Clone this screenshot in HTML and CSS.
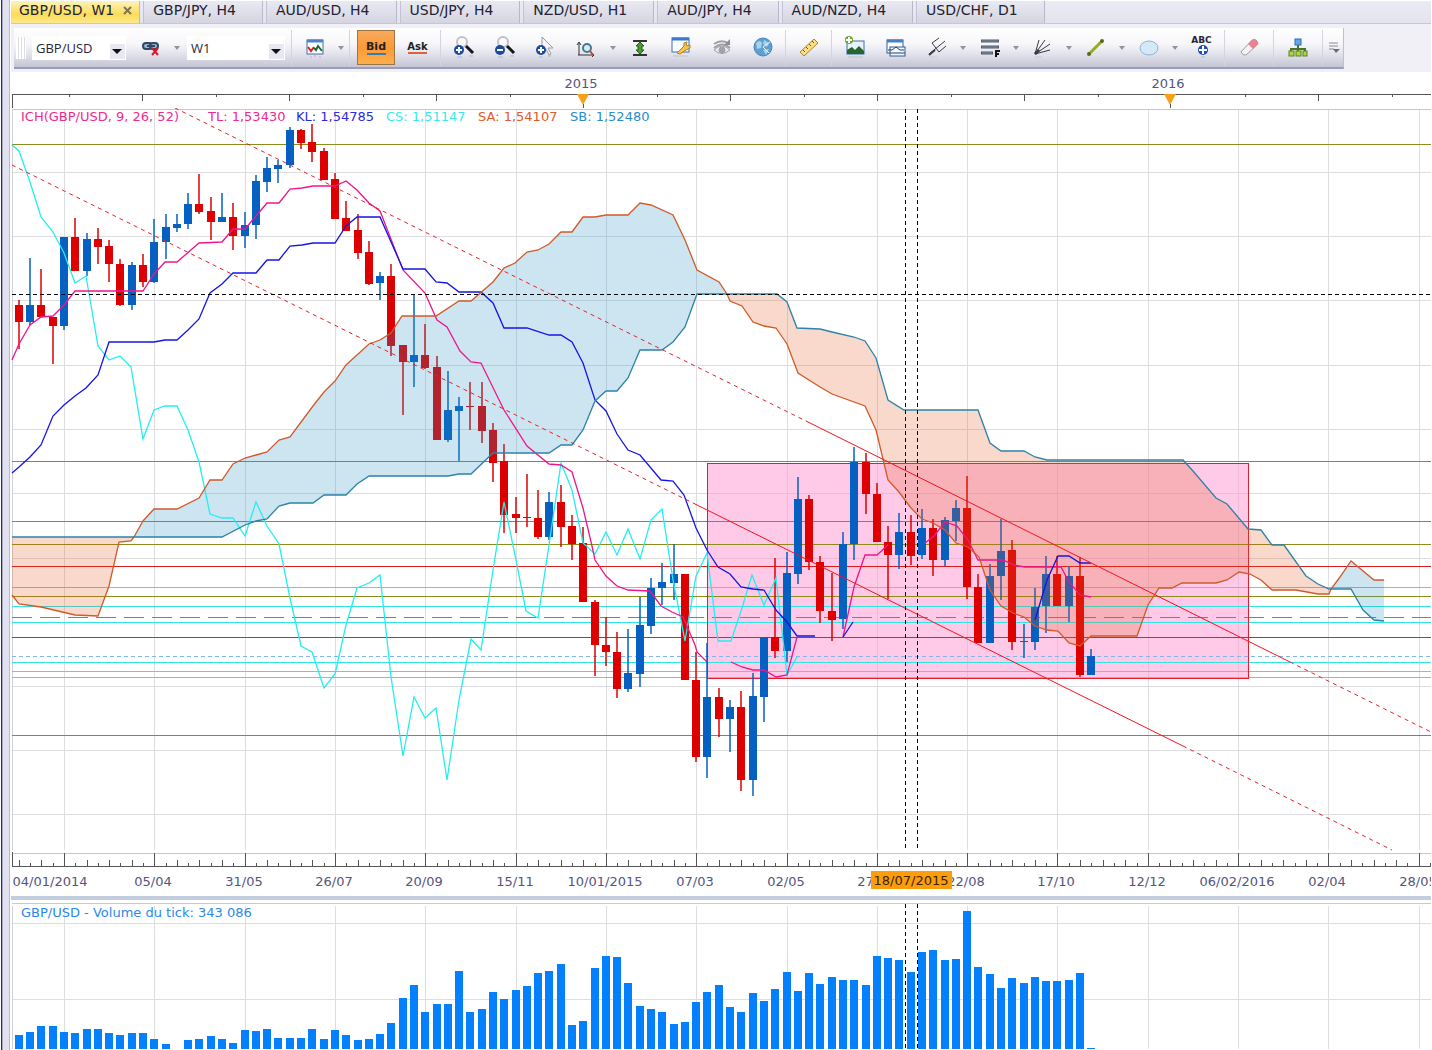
FILE: index.html
```html
<!DOCTYPE html>
<html lang="fr">
  <head>
    <meta charset="UTF-8" />
    <title>GBP/USD, W1</title>
    <link rel="stylesheet" href="styles.css">
  </head>
  <body>
    <div class="window">
      <nav class="tabs">
        <button class="tab active">GBP/USD, W1
          <svg width="9" height="9" viewBox="0 0 9 9"><path d="M1 1l7 7M8 1l-7 7" stroke="#7d7455" stroke-width="2" /></svg>
        </button>
        <button class="tab">GBP/JPY, H4</button>
        <button class="tab">AUD/USD, H4</button>
        <button class="tab">USD/JPY, H4</button>
        <button class="tab">NZD/USD, H1</button>
        <button class="tab">AUD/JPY, H4</button>
        <button class="tab">AUD/NZD, H4</button>
        <button class="tab">USD/CHF, D1</button>
      </nav>

      <div class="strip">
        <div class="toolbar">
          <span class="grip"></span>
          <label class="combo">
            <select aria-label="Instrument"><option>GBP/USD</option></select>
          </label>
          <button class="tool" aria-label="Unlink">
            <svg width="24" height="24" viewBox="0 0 24 24">
              <g fill="#9fb4c8" stroke="#2c4866" stroke-width="2"><rect x="4" y="7" width="9" height="6" rx="3" /><rect x="11" y="7" width="8" height="6" rx="3" /><path d="M8 10h8" /></g>
              <path d="M13 12l6 7M19 12l-6 7" stroke="#e01525" stroke-width="2" />
            </svg>
          </button>
          <button class="more" aria-label="More link options"></button>
          <label class="combo period">
            <select aria-label="Period"><option>W1</option></select>
          </label>
          <span class="sep"></span>
          <button class="tool" aria-label="Indicators">
            <svg width="24" height="24" viewBox="0 0 24 24">
              <rect x="4" y="4" width="16" height="14" fill="#fff" stroke="#3b6fae" /><path d="M4 5h16" stroke="#4c84cc" stroke-width="3" />
              <path d="M5 11l3 4 3-4" fill="none" stroke="#d8202a" stroke-width="2" /><path d="M11 12l2 2 2-4 4 5" fill="none" stroke="#1c6a35" stroke-width="2" />
              <path d="M7 21h2M11 20h2M16 21h2" stroke="#d7a6b4" />
            </svg>
          </button>
          <button class="more" aria-label="More indicators"></button>
          <span class="sep"></span>
          <button class="price bid">Bid</button>
          <button class="price ask">Ask</button>
          <span class="sep"></span>
          <button class="tool" aria-label="Zoom in">
            <svg width="24" height="24" viewBox="0 0 24 24">
              <circle cx="10" cy="6" r="5" fill="#fafafc" stroke="#c0c0ca" stroke-width="2" /><path d="M14 10l7 7" stroke="#15151c" stroke-width="3" />
              <circle cx="7" cy="14" r="5" fill="#1b4c9c" /><path d="M4 14h6M7 11v6" stroke="#fff" stroke-width="2" /><path d="M5 21h5M17 20h4" stroke="#b0b7cc" />
            </svg>
          </button>
          <button class="tool" aria-label="Zoom out">
            <svg width="24" height="24" viewBox="0 0 24 24">
              <circle cx="10" cy="6" r="5" fill="#fafafc" stroke="#c0c0ca" stroke-width="2" /><path d="M14 10l7 7" stroke="#15151c" stroke-width="3" />
              <circle cx="7" cy="14" r="5" fill="#1b4c9c" /><path d="M4 14h6" stroke="#fff" stroke-width="2" /><path d="M5 21h5M17 20h4" stroke="#b0b7cc" />
            </svg>
          </button>
          <button class="tool" aria-label="Pointer">
            <svg width="24" height="24" viewBox="0 0 24 24">
              <path d="M8 1v15l4-3 3 6 2-1-3-6h5z" fill="#f5f5f8" stroke="#9b9ba6" />
              <circle cx="7" cy="14" r="5" fill="#1b4c9c" /><path d="M4 14h6M7 11v6" stroke="#fff" stroke-width="2" /><path d="M5 21h4M14 20h3" stroke="#b0b7cc" />
            </svg>
          </button>
          <button class="tool" aria-label="Fit scale">
            <svg width="24" height="24" viewBox="0 0 24 24">
              <path d="M4 7v12M2 9l2-3 2 3M3 19h16l-2-2M17 21l2-2" fill="none" stroke="#333" />
              <circle cx="12" cy="12" r="4" fill="#d5ecf5" stroke="#467b8e" stroke-width="2" /><path d="M15 15l3 4" stroke="#c04a35" stroke-width="2" />
            </svg>
          </button>
          <button class="more" aria-label="More scales"></button>
          <button class="tool" aria-label="Vertical fit">
            <svg width="24" height="24" viewBox="0 0 24 24">
              <path d="M5 5h14M5 19h14" stroke="#333" stroke-width="2" /><path d="M12 6l4 4h-2v4h2l-4 4-4-4h2v-4h-2z" fill="#4c9a32" stroke="#245c18" />
            </svg>
          </button>
          <button class="tool" aria-label="Chart properties">
            <svg width="24" height="24" viewBox="0 0 24 24">
              <rect x="3" y="2" width="17" height="14" fill="#f8fbff" stroke="#3c6fb5" /><path d="M3 3h17" stroke="#3c78cc" stroke-width="3" />
              <path d="M8 17l7-7 0-3 3-1-1 3 2 1 2-1 0 3-4 2-6 4z" fill="#f5c545" stroke="#b57f20" /><path d="M4 20h15" stroke="#c8c2c0" />
            </svg>
          </button>
          <button class="tool" aria-label="Toggle visibility">
            <svg width="24" height="24" viewBox="0 0 24 24" fill="none" stroke="#a0a0a9">
              <path d="M4 14q8-8 16 0q-8 7-16 0z" /><path d="M4 12q8-7 16 0" stroke-width="2" /><circle cx="12" cy="14" r="3" fill="#a2a2ab" /><path d="M4 8q7-5 14-1" stroke-width="2" /><path d="M20 3v6h-6z" fill="#8c8c96" stroke="none" />
            </svg>
          </button>
          <button class="tool" aria-label="World clock">
            <svg width="24" height="24" viewBox="0 0 24 24">
              <circle cx="12" cy="11" r="9" fill="#5f9fd0" stroke="#4a86bd" /><path d="M5 7q4-4 6 0l-1 5-4 1zM13 4l5 3-2 4-4-3zM12 14l6-1-3 6z" fill="#a6d2ee" /><path d="M12 11l7-5M12 11l6 6" stroke="#e5f4fc" />
            </svg>
          </button>
          <span class="sep"></span>
          <button class="tool" aria-label="Ruler">
            <svg width="24" height="24" viewBox="0 0 24 24">
              <path d="M3 16L17 3l4 4L7 20z" fill="#f8df83" stroke="#ad8430" /><path d="M6 14l2 2M9 11l2 2M12 8l2 2M15 5l2 2" stroke="#765513" />
            </svg>
          </button>
          <span class="sep"></span>
          <button class="tool" aria-label="Add picture">
            <svg width="24" height="24" viewBox="0 0 24 24">
              <rect x="4" y="5" width="17" height="13" fill="#e7f3fc" stroke="#3c6fa5" /><path d="M4 18v-4l5-3 3 3 4-4 5 5v3z" fill="#24662b" />
              <circle cx="6" cy="4" r="4" fill="#6aa52c" /><path d="M3 4h6M6 1v6" stroke="#fff" stroke-width="2" /><path d="M5 21h15" stroke="#b9c3bd" />
            </svg>
          </button>
          <button class="tool" aria-label="Add window">
            <svg width="24" height="24" viewBox="0 0 24 24">
              <rect x="3" y="4" width="16" height="13" fill="#fff" stroke="#335a96" /><path d="M3 5h16" stroke="#4b7fc2" stroke-width="3" />
              <rect x="6" y="11" width="15" height="9" fill="#f3f8ff" stroke="#335a96" /><path d="M4 14h4l4-3 4 3h4M6 17h15" fill="none" stroke="#26406c" />
            </svg>
          </button>
          <button class="tool" aria-label="Pitchfork">
            <svg width="24" height="24" viewBox="0 0 24 24" fill="none" stroke="#3c3c46">
              <path d="M4 18L20 5" /><path d="M7 7l7 9M7 7l7-5M14 16l7-6" /><path d="M4 19l6-5" stroke-width="2" /><path d="M4 21h8" stroke="#cdcdd6" />
            </svg>
          </button>
          <button class="more" aria-label="More pitchforks"></button>
          <button class="tool" aria-label="Fibonacci levels">
            <svg width="24" height="24" viewBox="0 0 24 24">
              <path d="M3 5h18M3 11h18M3 17h12" stroke="#4f5c6c" stroke-width="3" /><path d="M4 5h16M4 11h16M4 17h10" stroke="#8291a2" />
              <path d="M18 21v-6h4M18 18h3" fill="none" stroke="#111" stroke-width="2" />
            </svg>
          </button>
          <button class="more" aria-label="More levels"></button>
          <button class="tool" aria-label="Fan">
            <svg width="24" height="24" viewBox="0 0 24 24" fill="none" stroke="#3a3a44">
              <path d="M4 18L8 4M4 18L14 4M4 18L19 8M4 18l15-4" /><path d="M4 18l4-4" stroke-width="3" /><path d="M4 21h7" stroke="#c8c8d2" />
            </svg>
          </button>
          <button class="more" aria-label="More fans"></button>
          <button class="tool" aria-label="Trend line">
            <svg width="24" height="24" viewBox="0 0 24 24">
              <path d="M5 18L18 5" stroke="#94ad20" stroke-width="3" /><circle cx="5" cy="18" r="2" fill="#56691d" /><circle cx="18" cy="5" r="2" fill="#56691d" />
            </svg>
          </button>
          <button class="more" aria-label="More lines"></button>
          <button class="tool" aria-label="Ellipse">
            <svg width="24" height="24" viewBox="0 0 24 24"><ellipse cx="12" cy="12" rx="9" ry="7" fill="#d4e8f8" stroke="#8fb2d4" /></svg>
          </button>
          <button class="more" aria-label="More shapes"></button>
          <button class="tool text-tool" aria-label="Add text">
            <span>ABC</span>
            <svg width="12" height="14" viewBox="0 0 12 14">
              <circle cx="7" cy="5" r="5" fill="#1c4fac" /><path d="M3 5h8M7 1v8" stroke="#fff" stroke-width="2" /><path d="M5 12h4" stroke="#a8bce0" />
            </svg>
          </button>
          <span class="sep"></span>
          <button class="tool wide" aria-label="Erase">
            <svg width="24" height="24" viewBox="0 0 24 24">
              <path d="M4 16L15 4q3-2 5 1t0 4L9 19q-3 1-5-3z" fill="#f4f2f2" stroke="#a09da2" /><path d="M11 8l4-4q3-2 5 1t0 4l-4 4z" fill="#ea8290" />
            </svg>
          </button>
          <span class="sep"></span>
          <button class="tool wide" aria-label="Object tree">
            <svg width="24" height="24" viewBox="0 0 24 24">
              <path d="M12 8v7M5 16v-3h14v3" fill="none" stroke="#4d7420" stroke-width="2" />
              <rect x="9" y="3" width="6" height="6" fill="#64a6e6" stroke="#2870b8" />
              <g fill="#b4d343" stroke="#56801e"><rect x="3" y="15" width="5" height="5" /><rect x="10" y="15" width="5" height="5" /><rect x="17" y="15" width="4" height="5" /></g>
            </svg>
          </button>
          <span class="sep"></span>
          <button class="tool menu" aria-label="Toolbar options">
            <svg width="12" height="12" viewBox="0 0 12 12"><path d="M1 1h9M1 4h9M1 7h5" stroke="#8a8a94" /><path d="M5 7h7l-4 4z" fill="#6c6c76" /></svg>
          </button>
        </div>
      </div>

      <svg class="years" id="years"></svg>

      <div class="plot">
        <svg class="main" id="main"></svg>
        <div class="legend">
          <span class="tenkan">ICH(GBP/USD, 9, 26, 52)</span>
          <span class="tenkan">TL: 1,53430</span>
          <span class="kijun">KL: 1,54785</span>
          <span class="chikou">CS: 1,51147</span>
          <span class="span-a">SA: 1,54107</span>
          <span class="span-b">SB: 1,52480</span>
        </div>
      </div>

      <svg class="dates" id="dates"></svg>
      <div class="splitter"></div>

      <div class="plot volume">
        <svg id="volume"></svg>
        <div class="legend">GBP/USD - Volume du tick: 343 086</div>
      </div>
    </div>

    <script src="chart.js"></script>
  </body>
</html>
```

FILE: styles.css
```css
html,
body {
  margin: 0;
  padding: 0;
  overflow: hidden;
}

body {
  font-family: 'DejaVu Sans', Verdana, sans-serif;
  font-size: 13px;
  color: #26263a;
  background: #fff;
}

button,
select {
  margin: 0;
  padding: 0;
  border: 0;
  background: none;
  color: inherit;
  font: inherit;
}

svg {
  display: block;
}

.window {
  display: flex;
  flex-direction: column;
  box-sizing: border-box;
  height: 100vh;
  padding: 1px 1px 1px 11px;
  background: linear-gradient(to right, #fff 1px, #2a2f50 1px, #2a2f50 2px, #a9abc4 2px, #a9abc4 3px, #e1e1ef 3px, #e1e1ef 9px, #b9b9c8 9px, #b9b9c8 10px, #fff 10px);
}

/* tabs */
.tabs {
  display: flex;
  gap: 3px;
  height: 22px;
  border-bottom: 1px solid #c6c6d6;
  background: linear-gradient(#ebebf4, #e3e3ef);
}

.tab {
  padding: 0 26px 4px 9px;
  border-left: 1px solid #c2c2d2;
  border-right: 1px solid #b8b8ca;
  background: linear-gradient(#e9e9f3, #d5d5e2);
  color: #222230;
  font-size: 14px;
  white-space: nowrap;
}

.tab.active {
  display: flex;
  align-items: center;
  gap: 9px;
  padding: 0 7px 4px 8px;
  border-left: 0;
  background: linear-gradient(#fdf3bd, #fbdc58 60%, #fde88c);
}

/* toolbar */
.strip {
  padding: 4px 0 3px 3px;
  background: #f0f0f6;
}

.toolbar {
  display: inline-flex;
  align-items: center;
  height: 39px;
  border-bottom: 2px solid #9c9cb4;
  border-right: 1px solid #c0c0ce;
  background: linear-gradient(#fff, #f7f7fa 40%, #e0e0ea 70%, #c4c4d4);
  vertical-align: top;
}

.grip {
  width: 10px;
  height: 22px;
  margin: 0 2px;
  background: repeating-linear-gradient(to right, #fff 0, #fff 2px, #dcdce6 2px, #dcdce6 3px);
}

.combo {
  position: relative;
  width: 94px;
  margin: 0 4px;
}

.combo.period {
  width: 98px;
}

.combo select {
  width: 100%;
  height: 24px;
  padding-left: 4px;
  appearance: none;
  background: #fff;
  font-family: 'Open Sans', sans-serif;
  font-size: 13px;
}

.combo::before,
.combo::after {
  content: '';
  position: absolute;
  pointer-events: none;
}

.combo::before {
  right: 1px;
  bottom: 1px;
  width: 15px;
  height: 15px;
  background: #e8e8f0;
}

.combo::after {
  right: 4px;
  bottom: 6px;
  border: 5px solid transparent;
  border-top-color: #111;
  border-bottom: 0;
}

.tool {
  display: flex;
  align-items: center;
  justify-content: center;
  width: 41px;
  height: 36px;
}

.tool.wide {
  width: 44px;
}

.tool.menu {
  width: 18px;
}

.more {
  width: 12px;
  height: 36px;
}

.more::before {
  content: '';
  display: block;
  width: 0;
  margin: 0 auto;
  border: 3px solid transparent;
  border-top: 4px solid #92929e;
  border-bottom: 0;
}

.sep {
  width: 1px;
  height: 36px;
  margin: 0 2px;
  background: #d4d4de;
}

.price {
  width: 41px;
  height: 35px;
  font-size: 11px;
  font-weight: bold;
  color: #222;
}

.price::after {
  content: '';
  display: block;
  width: 19px;
  height: 2px;
  margin: 0 auto;
  background: #e0603c;
}

.price.bid {
  width: 38px;
  margin: 0 2px 0 5px;
  border: 1px solid #9d7445;
  background: linear-gradient(#f8a95c, #fb9a38 50%, #ffae4c);
}

.price.ask {
  font-size: 10px;
}

.price.bid::after {
  background: #4078b4;
}

.text-tool {
  flex-direction: column;
  font-size: 9px;
  font-weight: bold;
  line-height: 9px;
}

/* charts */
.years,
.dates,
.main,
.volume svg {
  width: 100%;
}

.years {
  height: 36px;
}

.main {
  height: 744px;
}

.dates {
  height: 44px;
}

.plot {
  position: relative;
}

.volume {
  flex: 1;
  min-height: 0;
}

.volume svg {
  height: 100%;
}

.splitter {
  height: 4px;
  background: #c2cedd;
}

.legend {
  position: absolute;
  top: 1px;
  left: 10px;
  display: grid;
  grid-template-columns: 187px 88px 90px 92px 92px auto;
  line-height: 16px;
  white-space: nowrap;
}

.volume .legend {
  top: 5px;
  display: block;
  color: #2a88ee;
}

.tenkan {
  color: #ee2a90;
}

.kijun {
  color: #2a2ae0;
}

.chikou {
  color: #3ce6ee;
}

.span-a {
  color: #e05a2a;
}

.span-b {
  color: #2a8cc8;
}

svg text {
  font-size: 13px;
  fill: #54547e;
  text-anchor: middle;
}

svg .cursor-date {
  fill: #3a2408;
}

.crisp {
  shape-rendering: crispEdges;
}

.wick {
  stroke-width: 1.5;
}

polyline {
  fill: none;
  stroke-width: 1.3;
}
```

FILE: chart.js
```js
const NS = 'http://www.w3.org/2000/svg';
const LEFT = 11;
const RED = '#de0000';
const BLUE = '#0560c2';

// adds one svg element to a parent
function add(parent, tag, attrs, text) {
  const el = document.createElementNS(NS, tag);
  for (const key in attrs) {
    el.setAttribute(key, attrs[key]);
  }
  if (text) {
    el.textContent = text;
  }
  parent.appendChild(el);
  return el;
}

// every pane shares the coordinates of the window
function pane(id, top) {
  return add(document.getElementById(id), 'g', { transform: `translate(${-LEFT} ${-top})` });
}

function line(g, x1, y1, x2, y2, stroke, dash) {
  const attrs = { x1, y1, x2, y2, stroke, 'stroke-dasharray': dash || 'none' };
  if (x1 === x2 || y1 === y2) {
    attrs.class = 'crisp';
  }
  return add(g, 'line', attrs);
}

function hline(g, y, stroke, dash) {
  line(g, 12, y, '120%', y, stroke, dash);
}

function slotX(i) {
  return Math.round(18.8 + 11.29 * i);
}

function parse(str) {
  return str.trim().split(/\s+/).map((p) => p.split(',').map(Number));
}

// colour, high, body top, body bottom, low
const candles = `
r300,305,322,349 b258,305,322,325 r269,305,317,317 r317,317,326,364 b237,237,326,330
r218,237,271,271 b233,239,271,276 r228,239,247,264 r240,246,264,282 r259,264,305,306
b262,265,305,310 r254,265,282,287 b219,242,282,283 b214,227,242,259 b214,224,228,232
b193,204,224,229 r174,204,212,214 r197,211,222,240 b193,217,222,222 r203,217,236,250
b212,225,236,248 b175,181,225,239 b157,168,182,192 b160,165,169,183 b127,130,165,168
r129,130,143,149 r124,142,152,162 r148,151,180,180 r173,179,219,219 r201,218,231,231
r214,230,253,259 r241,252,284,285 b272,276,283,300 r264,276,346,356 r345,345,362,415
b295,355,362,387 r324,355,368,369 r356,367,440,440 b371,410,440,442 b397,406,411,461
r382,406,407,430 r382,406,431,443 r423,430,463,482 r444,461,515,533 r497,514,518,533
r474,517,518,527 r490,518,537,539 b492,502,537,540 r485,502,527,547 r515,526,544,560
r527,543,602,602 r600,602,645,676 r617,645,652,666 r632,652,689,698 b629,673,689,692
b597,625,674,687 b578,588,626,634 b563,582,588,605 b544,574,583,600 r574,574,680,680
r652,680,757,762 b643,697,757,778 r688,697,719,737 b700,707,719,752 r691,707,780,791
b673,696,780,796 b637,637,697,722 r558,637,651,658 b552,573,651,662 b477,499,574,584
r495,499,562,570 r556,562,611,623 r573,611,620,641 b532,544,619,629 b447,462,544,560
r453,462,494,514 r483,494,542,542 r526,542,555,599 b513,532,555,569 r515,532,556,565
b509,528,555,559 r519,528,560,576 b517,520,560,566 b500,508,521,541 r476,508,587,599
r574,587,643,643 b564,576,643,643 b519,551,576,600 r540,550,642,650 b624,641,642,658
b588,607,642,650 b556,574,606,633 r556,574,606,606 b566,576,606,622 r557,576,675,677
b649,656,675,675`.trim().split(/\s+/);

const volumeTops = [
  1035, 1032, 1026, 1026, 1032, 1033, 1029, 1029, 1033, 1035, 1033, 1033, 1039, 1044, 1049, 1040,
  1039, 1036, 1039, 1043, 1030, 1031, 1029, 1038, 1038, 1038, 1029, 1039, 1030, 1035, 1040, 1039,
  1034, 1023, 998, 985, 1012, 1004, 1004, 971, 1012, 1009, 992, 999, 990, 986, 973, 971,
  964, 1025, 1021, 968, 956, 957, 983, 1006, 1009, 1012, 1024, 1022, 1002, 992, 985, 1007,
  1012, 993, 1001, 989, 972, 991, 973, 984, 977, 980, 980, 985, 956, 958, 960, 972,
  952, 950, 960, 959, 911, 967, 974, 988, 978, 983, 977, 981, 981, 980, 973, 1048
];

const tenkan = [
  `12,360 19,344 30,325 41,317 53,316 64,305 75,291 143,291 154,274 165,262 177,262 199,243 222,242
  233,229 245,229 256,216 267,203 279,203 290,189 302,188 313,186 335,186 346,181 357,190 369,203
  380,211 403,270 425,293 437,320 447,327 460,351 471,362 481,363 504,410 527,446 549,464 561,465
  572,472 583,508 592,546 595,560 606,576 617,586 628,590 650,591 661,606 672,612 683,617 695,645
  697,652 707,662`,
  `731,662 742,667 753,670 764,670 776,677 787,675 797,637`,
  `843,637 854,587 865,555 877,555 888,545`,
  `925,543 934,536 945,522 957,526 968,540 978,560 1003,560 1014,565 1025,567 1061,567 1069,582
  1080,595 1091,597`
];

const kijun = [
  `12,473 19,467 30,457 41,445 53,416 64,405 75,396 86,388 98,375 109,342 154,342 165,340 177,340
  188,330 199,319 210,293 222,284 233,273 256,273 267,260 279,260 290,246 302,245 313,243 335,243
  346,226 357,217 380,217 403,269 425,269 436,282 447,283 459,292 481,292 493,303 504,328 527,328
  549,335 561,335 572,342 583,363 595,400 606,411 617,434 628,450 640,455 661,480 673,481 684,495
  696,528 707,550 718,567 730,574 741,587 753,589 764,590 776,610 787,622 797,636 815,636`,
  `843,637 853,622`,
  `1035,620 1047,580 1058,556 1069,556 1080,563 1091,563`
];

const chikou = [
  `12,145 19,151 30,182 41,217 53,232 64,253 75,283 86,276 98,346 109,360 120,356 131,367 143,439
  154,410 165,406 177,406 188,430 199,462 210,514 222,518 233,518 245,536 256,502 267,526 279,544
  290,598 301,646 312,652 324,688 335,674 346,625 357,588 369,583 380,575 391,677 403,756 414,697
  425,718 436,708 447,780 459,700 471,639 481,650 493,570 504,502 516,560 526,611 538,618 549,545
  561,463 572,490 583,543 595,554 606,532 617,555 628,529 640,559 651,520 662,509 673,580 685,641
  696,576 707,553 718,641 731,641 742,608 752,575 764,605 776,578 787,675 797,657`
];

const spanA = parse(`12,595 19,604 41,607 75,615 98,616 109,586 119,542 131,541 134,537 143,521
  154,509 177,509 199,498 210,480 222,480 233,464 245,458 256,455 267,452 279,440 290,437 313,406
  324,392 335,381 346,365 369,344 380,340 391,333 402,316 436,316 459,301 471,301 493,282 504,268
  515,263 527,252 538,250 549,244 561,232 572,232 583,217 595,217 606,215 628,215 640,203 651,205
  673,215 685,240 697,270 719,282 727,294 730,301 742,306 753,322 764,326 776,328 787,344 798,373
  820,387 832,394 865,406 876,430 888,480 899,492 911,508 922,519 933,523 945,530 956,543 968,547
  979,557 990,590 1001,606 1013,613 1024,617 1035,626 1047,630 1058,631 1069,643 1080,646 1091,636
  1137,636 1148,605 1159,588 1172,588 1182,583 1216,583 1227,580 1239,572 1250,574 1261,580
  1272,590 1296,590 1318,594 1329,594 1331,589 1340,577 1351,561 1374,580 1384,580`);

const spanB = parse(`12,537 134,537 222,537 245,525 256,521 267,519 279,506 290,503 313,503 324,495
  346,495 357,484 369,476 448,476 459,474 471,474 493,453 549,453 561,445 572,445 583,430 595,401
  606,391 617,391 628,378 640,350 662,350 673,342 685,327 697,294 727,294 777,294 787,302 797,328
  820,329 832,332 854,337 865,341 876,358 888,400 904,410 978,410 990,443 1001,451 1024,451
  1035,457 1047,460 1183,460 1193,471 1216,498 1227,504 1248,529 1261,530 1272,545 1284,545
  1306,576 1318,584 1329,589 1331,589 1351,589 1363,610 1374,620 1384,621`);

function polyline(g, points, stroke) {
  add(g, 'polyline', { points, stroke });
}

// part of the cloud between two crossings of its edges
function cloud(g, from, to, fill) {
  const inside = (p) => p[0] >= from && p[0] <= to;
  const points = spanA.filter(inside).concat(spanB.filter(inside).reverse());
  add(g, 'polygon', { points: points.join(' '), fill });
}

function grid(g, top, bottom, rows) {
  for (let x = 64, i = 4; x < 3000; i += 8, x = slotX(i)) {
    line(g, x, top, x, bottom, '#dedee0');
  }
  rows.forEach((y) => hline(g, y, '#dedee0'));
  line(g, 12, top, 12, bottom, '#d0d0d8');
}

function crosshair(g, top, bottom) {
  line(g, 905, top, 905, bottom, '#000', '4 3');
  line(g, 917, top, 917, bottom, '#000', '4 3');
}

function drawYears() {
  const g = pane('years', 72);
  hline(g, 94, '#555');
  line(g, 12, 94, 12, 108, '#555');
  for (let i = 0; i < 40; i++) {
    const x = Math.round(68.5 + 73.5 * i);
    line(g, x, 94, x, i % 2 ? 101 : 97, '#555');
  }
  [[583, '2015'], [1170, '2016']].forEach(([x, label]) => {
    add(g, 'path', { d: `M${x - 6} 94h12l-6 11z`, fill: '#f9a01b' });
    line(g, x, 104, x, 108, '#555');
    add(g, 'text', { x: x - 2, y: 88 }, label);
  });
}

function drawMain() {
  const g = pane('main', 108);
  hline(g, 109, '#c6c6d2');
  grid(g, 110, 850, [172, 236, 300, 365, 429, 493, 558, 622, 686, 750, 814]);
  add(g, 'rect', { x: 707, y: 463, width: 541, height: 215, fill: '#ff96cf', 'fill-opacity': 0.5 });

  [144, 461, 521, 544, 596, 735].forEach((y) => hline(g, y, '#8c8c1c'));
  hline(g, 617, '#8c8c1c', '20 8');
  hline(g, 566, '#d81c1c');
  hline(g, 637, '#f01c1c');
  hline(g, 656, '#7db8e8', '4 3');
  [587, 606, 622, 662, 671, 677].forEach((y) => hline(g, y, '#30e4e8'));
  add(g, 'rect', { x: 707, y: 463, width: 541, height: 215, fill: 'none', stroke: '#e02030', class: 'crisp' });

  candles.forEach((candle, i) => {
    const [high, top, bottom, low] = candle.slice(1).split(',').map(Number);
    const color = candle[0] === 'r' ? RED : BLUE;
    const x = slotX(i);
    add(g, 'line', { x1: x, y1: high, x2: x, y2: low, stroke: color, class: 'wick' });
    add(g, 'rect', { x: x - 4, y: top, width: 8, height: bottom - top, fill: color });
  });

  cloud(g, 12, 134, 'rgba(225,90,35,0.23)');
  cloud(g, 134, 727, 'rgba(40,145,195,0.24)');
  cloud(g, 727, 1331, 'rgba(225,90,35,0.23)');
  cloud(g, 1331, 1384, 'rgba(40,145,195,0.24)');

  chikou.forEach((points) => polyline(g, points, '#22eef0'));
  tenkan.forEach((points) => polyline(g, points, '#f0148c'));
  kijun.forEach((points) => polyline(g, points, '#1414e6'));
  polyline(g, spanA.join(' '), '#d05a28');
  polyline(g, spanB.join(' '), '#2c82a8');

  // trend channel, dashed where it is extended
  line(g, 175, 108, 808, 422, '#e8202c', '4 4');
  line(g, 808, 422, 1290, 662, '#f4141c');
  line(g, 1290, 662, 1431, 732, '#e8202c', '4 4');
  line(g, 12, 165, 693, 503, '#e8202c', '4 4');
  line(g, 693, 503, 1183, 746, '#f4141c');
  line(g, 1183, 746, 1392, 850, '#e8202c', '4 4');

  hline(g, 294, '#000', '4 3');
  crosshair(g, 109, 850);
}

function drawDates() {
  const g = pane('dates', 852);
  hline(g, 853, '#c6c6d2');
  hline(g, 866, '#555');
  line(g, 12, 852, 12, 866, '#555');
  for (let i = 0; i < 260; i++) {
    const x = slotX(i);
    const top = i % 8 === 4 ? 853 : i % 2 ? 863 : 860;
    line(g, x, top, x, 866, '#555');
  }
  const labels = ['04/01/2014', '05/04', '31/05', '26/07', '20/09', '15/11', '10/01/2015', '07/03',
    '02/05', '27/06', '22/08', '17/10', '12/12', '06/02/2016', '02/04', '28/05'];
  labels.forEach((label, i) => {
    const x = i === 0 ? 50 : slotX(4 + 8 * i) - 1;
    add(g, 'text', { x, y: 886 }, label);
  });
  add(g, 'rect', { x: 871, y: 871, width: 81, height: 18, fill: '#ff9c0a' });
  add(g, 'text', { x: 911, y: 885, class: 'cursor-date' }, '18/07/2015');
}

function drawVolume() {
  const g = pane('volume', 900);
  hline(g, 903, '#c9c9cf');
  grid(g, 906, 1400, [923, 999]);
  volumeTops.forEach((top, i) => {
    add(g, 'rect', { x: slotX(i) - 4, y: top, width: 8, height: 1049 - top, fill: '#0580fc' });
  });
  crosshair(g, 904, 1400);
}

drawYears();
drawMain();
drawDates();
drawVolume();
```
